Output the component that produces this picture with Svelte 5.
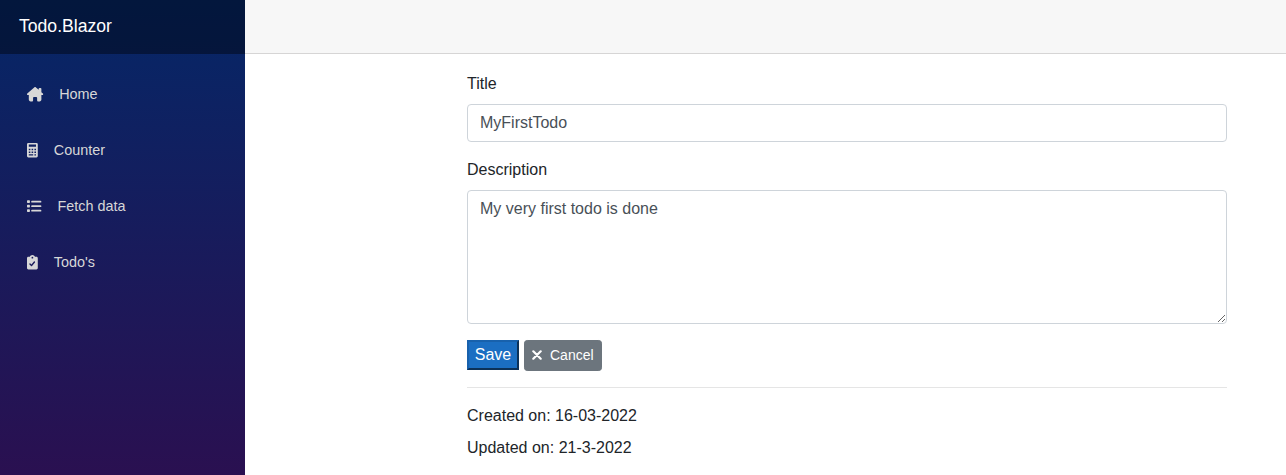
<script>
  let title = $state('MyFirstTodo');
  let description = $state('My very first todo is done');

  const links = [
    {
      label: 'Home', width: 16.2, gap: 16,
      box: '0 0 576 512',
      path: 'M575.8 255.5C575.8 273.5 560.8 287.6 543.8 287.6H511.8L512.5 447.7C512.6 483 484 512 448 512H392C374 512 360 498 360 480V384C360 366 346 352 328 352H248C230 352 216 366 216 384V480C216 498 202 512 184 512H128C93 512 64 483 64 448V287.6H32C14 287.6 0 273.5 0 255.5C0 246.5 3 238.5 10 231.5L266.4 8C273.4 1 281.4 0 288.4 0C295.4 0 303.4 2 309.5 7L416 100V64C416 46 430 32 448 32H480C498 32 512 46 512 64V184L564.8 231.5C572.8 238.5 576.8 246.5 575.8 255.5Z'
    },
    {
      label: 'Counter', width: 10.8, gap: 16,
      box: '0 0 384 512',
      path: 'M48 0Q0 0 0 48V464Q0 512 48 512H336Q384 512 384 464V48Q384 0 336 0ZM64 56H320V136H64ZM64 208H120V256H64ZM164 208H220V256H164ZM264 208H320V256H264ZM64 304H120V352H64ZM164 304H220V352H164ZM264 304H320V352H264ZM64 400H220V448H64ZM264 400H320V448H264Z'
    },
    {
      label: 'Fetch data', width: 14.4, gap: 16,
      box: '0 0 512 512',
      path: 'M24 48H80Q104 48 104 72V120Q104 144 80 144H24Q0 144 0 120V72Q0 48 24 48ZM24 208H80Q104 208 104 232V280Q104 304 80 304H24Q0 304 0 280V232Q0 208 24 208ZM24 368H80Q104 368 104 392V440Q104 464 80 464H24Q0 464 0 440V392Q0 368 24 368ZM180 64H480A32 32 0 0 1 480 128H180A32 32 0 0 1 180 64ZM180 224H480A32 32 0 0 1 480 288H180A32 32 0 0 1 180 224ZM180 384H480A32 32 0 0 1 480 448H180A32 32 0 0 1 180 384Z'
    },
    {
      label: "Todo's", width: 10.8, gap: 16,
      box: '0 0 384 512',
      path: 'M336 64H282.5C269 27 234 0 192 0S115 27 101.500 64H48C21.500 64 0 85.500 0 112V464C0 490.500 21.500 512 48 512H336C362.500 512 384 490.500 384 464V112C384 85.500 362.500 64 336 64ZM192 64A32 32 0 1 1 192 128A32 32 0 0 1 192 64ZM282.900 262.800L178.900 390.800Q170 400 161 400Q152 400 144 392L88 336A24 24 0 0 1 122 302L159 339L245 232A24 24 0 0 1 282.900 262.800Z'
    }
  ];
</script>

<div class="page">
  <aside class="sidebar">
    <div class="brand-row"><span class="brand">Todo.Blazor</span></div>
    <nav>
      {#each links as link}
        <div class="nav-item">
          <a href="#top">
            <svg viewBox={link.box} style:width="{link.width}px" style:margin-right="{link.gap}px" aria-hidden="true">
              <path fill-rule="evenodd" d={link.path} />
            </svg>
            <span>{link.label}</span>
          </a>
        </div>
      {/each}
    </nav>
  </aside>

  <main>
    <div class="top-row"></div>
    <article>
      <div class="group">
        <label for="title">Title</label>
        <input id="title" type="text" bind:value={title} />
      </div>
      <div class="group">
        <label for="description">Description</label>
        <textarea id="description" rows="5" bind:value={description}></textarea>
      </div>
      <div class="actions">
        <button class="save">Save</button>
        <button class="cancel">
          <svg viewBox="0 0 10 10" aria-hidden="true"><path d="M1.3 1.300 8.700 8.700M8.700 1.300 1.300 8.700" /></svg>
          <span>Cancel</span>
        </button>
      </div>
      <hr />
      <p>Created on: 16-03-2022</p>
      <p>Updated on: 21-3-2022</p>
    </article>
  </main>
</div>

<style>
  :global(body) {
    margin: 0;
    background: #fff;
    overflow: hidden;
  }
  .page {
    display: flex;
    height: 475px;
    overflow: hidden;
    font: 16px/24px "Liberation Sans", Arial, sans-serif;
    color: #212529;
  }
  .page * {
    box-sizing: border-box;
  }
  .sidebar {
    width: 245px;
    flex: none;
    background: linear-gradient(180deg, rgb(5, 39, 103) 0, #3a0647 680px);
  }
  .brand-row {
    height: 54px;
    display: flex;
    align-items: center;
    padding: 0 0 2px 19px;
    background: rgba(0, 0, 0, 0.4);
  }
  .brand {
    font-size: 17.6px;
    color: #fff;
  }
  nav {
    padding: 16px 11px 0;
  }
  .nav-item {
    padding-bottom: 8px;
  }
  .nav-item a {
    display: flex;
    align-items: center;
    height: 48px;
    padding-left: 16px;
    font-size: 14.4px;
    color: #d7d7d7;
    text-decoration: none;
  }
  .nav-item svg {
    height: 14.4px;
    flex: none;
    fill: currentColor;
    overflow: visible;
  }
  main {
    flex: 1;
    min-width: 0;
  }
  .top-row {
    height: 54px;
    background: #f7f7f7;
    border-bottom: 1px solid #d6d5d5;
  }
  article {
    width: 760px;
    margin-left: 222px;
    padding-top: 18px;
  }
  .group {
    display: flex;
    flex-direction: column;
    margin-bottom: 16px;
  }
  label {
    margin-bottom: 8px;
  }
  input,
  textarea {
    display: block;
    width: 100%;
    margin: 0;
    padding: 6px 12px;
    border: 1px solid #ced4da;
    border-radius: 4px;
    background: #fff;
    font: inherit;
    color: #495057;
    outline: none;
  }
  input {
    height: 38px;
  }
  textarea {
    height: 134px;
    resize: vertical;
    overflow: auto;
  }
  .actions {
    display: flex;
    align-items: flex-start;
    gap: 5px;
    height: 31px;
  }
  button {
    margin: 0;
    font-family: inherit;
    color: #fff;
  }
  .save {
    width: 52px;
    height: 30px;
    padding: 0;
    border: 2px outset #1861ac;
    background: #1b6ec2;
    font-size: 16px;
    line-height: 24px;
  }
  .cancel {
    display: flex;
    align-items: center;
    width: 78px;
    height: 31px;
    padding: 0 0 0 7px;
    border: 1px solid #6c757d;
    border-radius: 3.2px;
    background: #6c757d;
    font-size: 14px;
    line-height: 21px;
  }
  .cancel svg {
    width: 10px;
    height: 10px;
    margin: 0 8px 1px 0;
    fill: none;
    stroke: #fff;
    stroke-width: 2.2;
    stroke-linecap: round;
  }
  hr {
    height: 1px;
    margin: 16px 0;
    border: 0;
    background: rgba(0, 0, 0, 0.1);
  }
  p {
    margin: 0 0 8px;
  }
</style>
